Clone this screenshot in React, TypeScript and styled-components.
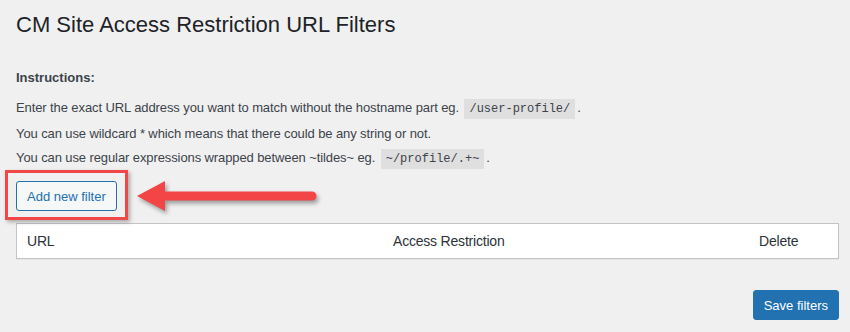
import styled, { createGlobalStyle } from "styled-components";

const GlobalStyle = createGlobalStyle`
  html, body {
    margin: 0;
    padding: 0;
    background: #f0f0f1;
  }
  body {
    font-family: "Liberation Sans", Arial, sans-serif;
    font-size: 13px;
    color: #3c434a;
  }
`;

const Wrap = styled.div`
  padding: 10px 11px 11px 16px;
  display: flex;
  flex-direction: column;
`;

const Title = styled.h1`
  margin: 0;
  font-size: 22px;
  line-height: 30px;
  font-weight: 400;
  color: #1d2327;
`;

const Heading = styled.div`
  margin-top: 28px;
  font-weight: 700;
  line-height: 20px;
  color: #3c434a;
`;

const Lines = styled.div`
  margin-top: 10px;
  display: flex;
  flex-direction: column;
  gap: 4.5px;
`;

const Line = styled.p`
  margin: 0;
  line-height: 20px;
  letter-spacing: -0.1px;
`;

const Code = styled.code`
  font-family: "Liberation Mono", Consolas, monospace;
  font-size: 12px;
  letter-spacing: 0;
  background: rgba(0, 0, 0, 0.07);
  padding: 3px 5px;
  margin: 0 2px;
  color: #3c434a;
`;

const ButtonRow = styled.div`
  position: relative;
  margin-top: 12px;
  display: flex;
`;

const Button = styled.button<{ $primary?: boolean }>`
  font-family: inherit;
  font-size: 13px;
  height: 30px;
  padding: 0 10px;
  border-radius: 3px;
  border: 1px solid #2271b1;
  cursor: pointer;
  background: ${(p) => (p.$primary ? "#2271b1" : "#f6f7f7")};
  color: ${(p) => (p.$primary ? "#ffffff" : "#2271b1")};
`;

const Highlight = styled.div`
  position: absolute;
  left: -11px;
  top: -11px;
  width: 123px;
  height: 50px;
  box-sizing: border-box;
  border: 3px solid #f04848;
  box-shadow: 2px 2px 4px rgba(0, 0, 0, 0.3);
  pointer-events: none;
`;

const Arrow = styled.svg`
  position: absolute;
  left: 114px;
  top: -5px;
  filter: drop-shadow(2px 3px 2px rgba(0, 0, 0, 0.35));
  overflow: visible;
`;

const Table = styled.div`
  margin-top: 12px;
  background: #ffffff;
  border: 1px solid #c3c4c7;
  box-shadow: 0 1px 1px rgba(0, 0, 0, 0.04);
  display: grid;
  grid-template-columns: 366px 366px 1fr;
`;

const Th = styled.div`
  padding: 0 10px;
  height: 34px;
  display: flex;
  align-items: center;
  font-size: 14px;
  letter-spacing: -0.2px;
  color: #2c3338;
`;

const Footer = styled.div`
  margin-top: 31px;
  display: flex;
  justify-content: flex-end;
`;

export default function App() {
  return (
    <>
      <GlobalStyle />
      <Wrap>
        <Title>CM Site Access Restriction URL Filters</Title>
        <Heading>Instructions:</Heading>
        <Lines>
          <Line>
            Enter the exact URL address you want to match without the hostname part eg.{" "}
            <Code>/user-profile/</Code>.
          </Line>
          <Line>You can use wildcard * which means that there could be any string or not.</Line>
          <Line>
            You can use regular expressions wrapped between ~tildes~ eg. <Code>~/profile/.+~</Code>.
          </Line>
        </Lines>
        <ButtonRow>
          <Button>Add new filter</Button>
          <Highlight />
          <Arrow width="190" height="40" viewBox="0 0 190 40">
            <path d="M7 20 L35 5 L35 35 Z" fill="#f44546" />
            <line x1="33" y1="20" x2="182" y2="20" stroke="#f44546" strokeWidth="9" strokeLinecap="round" />
          </Arrow>
        </ButtonRow>
        <Table>
          <Th>URL</Th>
          <Th>Access Restriction</Th>
          <Th>Delete</Th>
        </Table>
        <Footer>
          <Button $primary>Save filters</Button>
        </Footer>
      </Wrap>
    </>
  );
}
